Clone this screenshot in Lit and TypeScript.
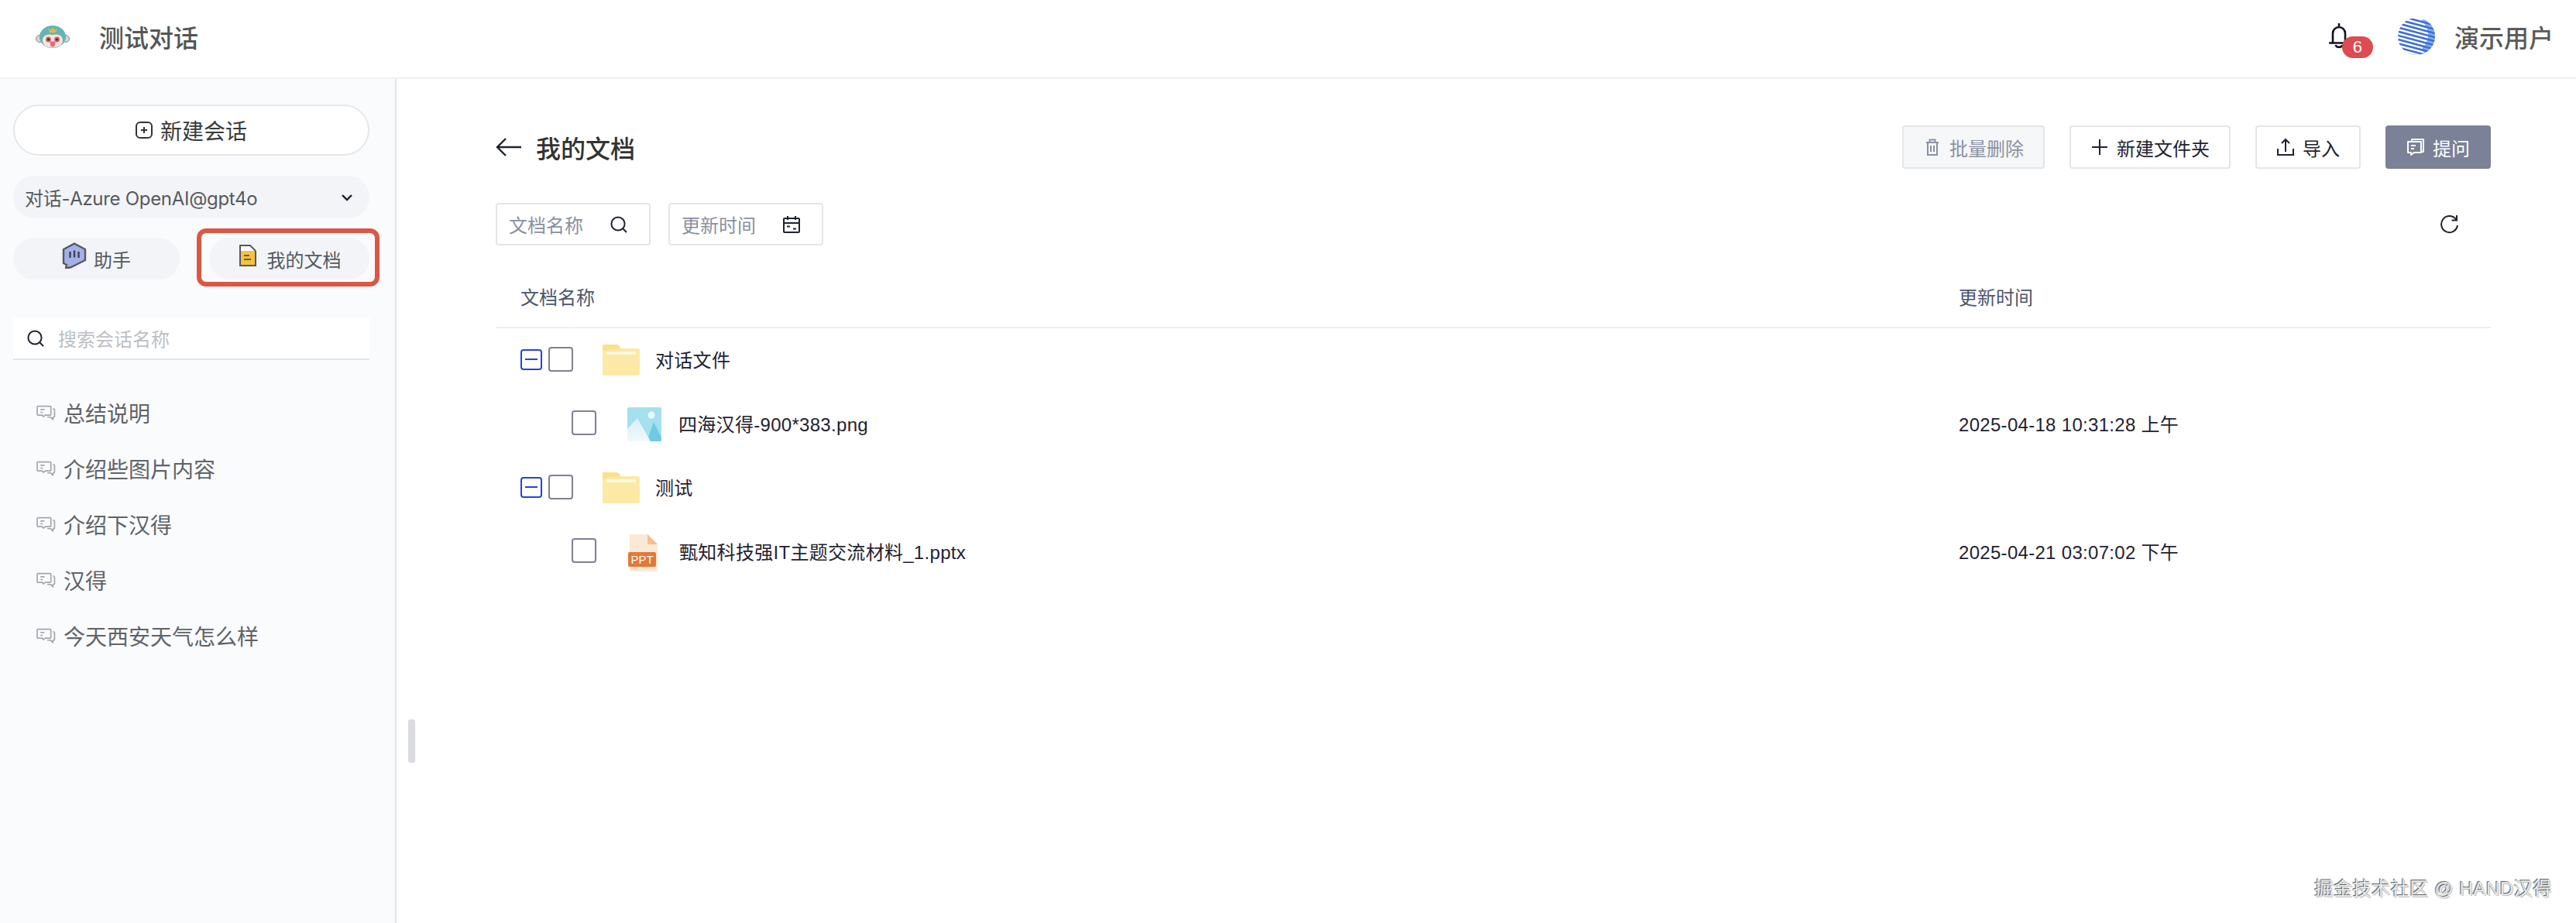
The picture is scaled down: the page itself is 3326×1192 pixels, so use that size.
import { LitElement, html, css, svg } from "lit";
import { customElement } from "lit/decorators.js";

const chatIcon = html`<svg class="chat" viewBox="0 0 24 20" fill="none" stroke="#a3a7ad" stroke-width="1.6" stroke-linejoin="round"><path d="M2 1.500h15a1 1 0 0 1 1 1v9a1 1 0 0 1-1 1h-6l-2.500 2-1-2H2a1 1 0 0 1-1-1v-9a1 1 0 0 1 1-1z"/><path d="M5 5.500h5M5 9h3"/><path d="M20.500 4.500c1.500 0 2 .8 2 1.800v7c0 1-.6 1.700-1.800 1.700l-.2 3-3-3h-4"/></svg>`;
const searchIcon = (c: string) => html`<svg class="i22" viewBox="0 0 22 22" fill="none" stroke="${c}" stroke-width="2"><circle cx="10" cy="10" r="8.600"/><path d="M16.500 16.500l4.500 4.500"/></svg>`;
const checkbox = html`<span class="cb"></span>`;
const minus = html`<span class="minus"><i></i></span>`;
const folder = html`<svg class="folder" viewBox="0 0 48 40"><path d="M2 0h16c2 0 3 1 4 3l1 2h23a2 2 0 0 1 2 2v31a2 2 0 0 1-2 2H2a2 2 0 0 1-2-2V2a2 2 0 0 1 2-2z" fill="#fce9a6"/><path d="M0 8V2a2 2 0 0 1 2-2h16c2 0 3 1 4 3l1 2z" fill="#fbe08e"/><rect x="5" y="9" width="38" height="4" rx="1" fill="#fff8df"/></svg>`;
const imageIcon = html`<svg class="file" viewBox="0 0 44 44"><defs><linearGradient id="mtn" x1="0" y1="0" x2="0" y2="1"><stop offset="0" stop-color="#d8eef6"/><stop offset="1" stop-color="#f2f9fc"/></linearGradient></defs><path d="M2 0h40a2 2 0 0 1 2 2v40a2 2 0 0 1-2 2H0V2a2 2 0 0 1 2-2z" fill="#a4e0ee"/><circle cx="31" cy="10" r="4.500" fill="#eef9fc"/><path d="M25 44l9-25 10 20v3a2 2 0 0 1-2 2z" fill="#6fcbe4"/><path d="M0 44V28L13 14l17 30z" fill="url(#mtn)"/></svg>`;
const pptIcon = html`<svg class="file ppt" viewBox="0 0 38 48"><path d="M2 0h23l13 13v35H2z" fill="#fbe9d6"/><path d="M25 0l13 13H27a2 2 0 0 1-2-2z" fill="#f4c08f"/><rect x="0" y="23" width="36" height="19" rx="2" fill="#e2793a"/><text x="18" y="37.500" text-anchor="middle" class="ppt-t">PPT</text></svg>`;

const stripes = [4, 9, 14, 19, 24, 29, 34, 39, 44, 49].map(
  (y) => svg`<path d="M-6 ${y}H56" stroke="#3f6fd0" stroke-width="2.600"/>`
);

const logo = html`<svg class="logo" viewBox="0 0 44 30">
  <circle cx="5" cy="18" r="4.500" fill="#d4d4d4" stroke="#8a8a8a"/><circle cx="39" cy="18" r="4.500" fill="#d4d4d4" stroke="#8a8a8a"/>
  <ellipse cx="22" cy="15.500" rx="17" ry="14.500" fill="#62b5b0"/>
  <path d="M9 20c0-6 6-9 13-7 7-2 13 1 13 7 0 6-6 9.500-13 9.500S9 26 9 20z" fill="#f7e4de"/>
  <path d="M16 4l3 3 3-3 3 3 3-3-2 6H18z" fill="#e7b84e"/>
  <circle cx="16.500" cy="19" r="3.400" fill="#d8576a"/><circle cx="27.500" cy="19" r="3.400" fill="#d8576a"/>
  <circle cx="16.500" cy="19" r="1.500" fill="#333"/><circle cx="27.500" cy="19" r="1.500" fill="#333"/>
  <path d="M18.500 21.500h7l-.5 4a3 3 0 0 1-6 0z" fill="#de6d7d"/>
</svg>`;

const rows = [
  { folder: true, name: "对话文件", time: "" },
  { folder: false, icon: imageIcon, name: "四海汉得-900*383.png", time: "2025-04-18 10:31:28 上午" },
  { folder: true, name: "测试", time: "" },
  { folder: false, icon: pptIcon, name: "甄知科技强IT主题交流材料_1.pptx", time: "2025-04-21 03:07:02 下午" },
];

@customElement("app-root")
export class AppRoot extends LitElement {
  static styles = css`
    :host { display: block; width: 3326px; height: 1192px; position: relative; overflow: hidden; background: #fff;
      font-family: "Liberation Sans", "Noto Sans CJK SC", sans-serif; font-size: 24px; color: #1f2230; }
    svg { display: block; flex: none; }
    .top { height: 102px; box-sizing: border-box; border-bottom: 2px solid #f0f1f3; display: flex; align-items: center; padding: 0 29px 6px 46px; }
    .logo { width: 44px; height: 30px; margin-right: 38px; }
    .app-name { font-size: 32px; font-weight: 500; color: #555; }
    .spacer { flex: 1; }
    .bell { position: relative; width: 26px; height: 34px; margin-right: 63px; }
    .bell svg { width: 26px; height: 34px; }
    .badge { position: absolute; left: 17px; top: 17px; width: 40px; height: 28px; border-radius: 14px; background: #dc4c50; color: #fff; font-size: 22px; line-height: 28px; text-align: center; }
    .avatar { width: 48px; height: 48px; margin-right: 25px; }
    .user { font-size: 32px; font-weight: 500; color: #5a5a5a; }

    .body { display: flex; height: 1090px; }
    .side { width: 512px; box-sizing: border-box; background: #fafbfd; border-right: 2px solid #e4e6eb; padding: 33px 33px 0 17px; position: relative; flex: none; }
    .new { height: 66px; box-sizing: border-box; border: 2px solid #e5e7ea; border-radius: 33px; background: #fff; display: flex; align-items: center; justify-content: center; gap: 10px; font-size: 28px; color: #3a3a3a; }
    .new svg { width: 22px; height: 22px; }
    .select { height: 55px; margin-top: 26px; background: #f2f4f7; border-radius: 28px; display: flex; align-items: center; justify-content: space-between; padding: 0 22px 0 15px; color: #555a60; font-family: Inter, "Noto Sans CJK SC", sans-serif; letter-spacing: -.3px; }
    .select svg { width: 14px; height: 10px; }
    .tabs { display: flex; justify-content: space-between; margin-top: 25px; }
    .tab { height: 54px; background: #f2f4f7; border-radius: 27px; display: flex; align-items: center; justify-content: center; color: #555a60; position: relative; box-sizing: border-box; }
    .tab.a { width: 215px; gap: 9px; }
    .tab.b { width: 207px; gap: 14px; padding-left: 2px; }
    .tab.a svg { width: 32px; height: 34px; margin-top: -8px; }
    .tab.b svg { width: 22px; height: 28px; margin-top: -8px; }
    .mark { position: absolute; left: -16px; top: -12px; width: 236px; height: 75px; box-sizing: border-box; border: 6px solid #dc5644; border-radius: 12px; }
    .search { height: 55px; margin-top: 49px; box-sizing: border-box; background: #fff; border-bottom: 2px solid #e3e5e9; display: flex; align-items: center; gap: 18px; padding-left: 18px; color: #bcbfc4; }
    .list { margin-top: 32px; padding-left: 30px; }
    .item { height: 72px; display: flex; align-items: center; gap: 10px; font-size: 28px; color: #5f6368; }
    .chat { width: 25px; height: 21px; }
    .handle { position: absolute; left: 527px; top: 929px; width: 9px; height: 56px; border-radius: 3px; background: #d9dbe0; }

    .main { flex: 1; box-sizing: border-box; padding: 60px 110px 0 128px; min-width: 0; }
    .bar { display: flex; align-items: center; height: 56px; }
    .back { width: 33px; height: 26px; margin-right: 19px; }
    .title { font-size: 32px; font-weight: 500; color: #333; margin-top: -1px; }
    .btn { height: 56px; box-sizing: border-box; border: 2px solid #e3e5e9; border-radius: 4px; display: flex; align-items: center; justify-content: center; gap: 10px; color: #1f2230; margin-left: 32px; background: #fff; }
    .btn svg { width: 24px; height: 24px; }
    .btn.del { width: 184px; background: #f5f7f9; color: #8b91a3; }
    .btn.folder-b { width: 208px; }
    .btn.imp { width: 136px; }
    .btn.ask { width: 136px; background: #7b8197; border-color: #7b8197; color: #fff; }
    .filters { display: flex; align-items: center; margin-top: 44px; height: 55px; }
    .field { width: 200px; height: 55px; box-sizing: border-box; border: 2px solid #e3e5e9; border-radius: 4px; display: flex; align-items: center; justify-content: space-between; padding: 0 28px 0 15px; color: #8b90a0; margin-right: 23px; }
    .field svg { width: 22px; height: 22px; }
    .i22 { width: 22px; height: 22px; }
    .refresh { width: 26px; height: 24px; margin-left: auto; margin-right: 40px; }
    .thead { height: 79px; margin-top: 28px; box-sizing: border-box; border-bottom: 2px solid #eef0f2; display: grid; grid-template-columns: 1889px 1fr; align-items: center; color: #4c5570; padding: 0 0 3px 32px; }
    .thead span:last-child { margin-left: -32px; }
    .row { height: 82.5px; display: grid; grid-template-columns: 1889px 1fr; align-items: center; color: #1f2230; letter-spacing: .3px; }
    .row span:not(.cb):not(.minus) { margin-top: -3px; }
    .name { display: flex; align-items: center; }
    .cb { width: 32px; height: 32px; box-sizing: border-box; border: 2px solid #7d8095; border-radius: 4px; flex: none; background: #fff; }
    .minus { width: 28px; height: 27px; box-sizing: border-box; border: 2px solid #2146d2; border-radius: 4px; display: flex; align-items: center; justify-content: center; flex: none; margin-right: 8px; }
    .minus i { display: block; width: 16px; height: 2px; background: #2146d2; }
    .name.dir { padding-left: 32px; }
    .name.dir .cb { margin-top: -2px; margin-right: 38px; }
    .name.dir .folder { width: 48px; height: 40px; margin-right: 20px; }
    .name.dir .minus { margin-top: -2px; }
    .name.doc { padding-left: 98px; }
    .name.doc .cb { margin-top: -4px; margin-right: 40px; }
    .file { width: 44px; height: 44px; margin-right: 22px; }
    .file.ppt { width: 38px; height: 48px; margin-right: 28px; margin-left: 1px; margin-top: 2px; }
    .ppt-t { font-size: 15px; fill: #fff8f0; font-family: "Liberation Sans", sans-serif; letter-spacing: 0; }
    .wm { position: absolute; right: 31px; bottom: 29px; font-size: 24px; letter-spacing: .6px; color: #e9e9e9; text-shadow: -1px -1px 1px #555, 1px 1px 1px #bbb; }
  `;

  render() {
    return html`
      <div class="top">
        ${logo}
        <div class="app-name">测试对话</div>
        <div class="spacer"></div>
        <div class="bell">
          <svg viewBox="0 0 26 34" fill="none" stroke="#10131f" stroke-width="2.600" stroke-linecap="round"><path d="M13 1v3M5 25V13a8 8 0 0 1 16 0v12M1 25.500h24M9 29c1.500 2.500 6.500 2.500 8 0"/></svg>
          <span class="badge">6</span>
        </div>
        <svg class="avatar" viewBox="0 0 48 48">
          <defs><clipPath id="ac"><circle cx="24" cy="24" r="24"/></clipPath></defs>
          <g clip-path="url(#ac)">
            <circle cx="24" cy="24" r="24" fill="#fff"/>
            <path d="M36 2a24 24 0 0 1 0 46h-1l-4-8C42 28 42 14 30 3z" fill="#86aef7"/>
            <g transform="rotate(15 24 24)">${stripes}</g>
          </g>
        </svg>
        <div class="user">演示用户</div>
      </div>
      <div class="body">
        <aside class="side">
          <div class="new">
            <svg viewBox="0 0 22 22" fill="none" stroke="#333" stroke-width="2"><rect x="1" y="1" width="20" height="20" rx="5"/><path d="M7 11h8M11 7v8"/></svg>
            新建会话
          </div>
          <div class="select">
            <span>对话-Azure OpenAI@gpt4o</span>
            <svg viewBox="0 0 14 10" fill="none" stroke="#1f2230" stroke-width="2.400"><path d="M1 2l6 6 6-6"/></svg>
          </div>
          <div class="tabs">
            <div class="tab a">
              <svg viewBox="0 0 32 34"><path d="M16 1.500L30 9v14l-14 7-5 2.500-6 .5 1-4-4-2V9z" fill="#a3b0ea" stroke="#55585f" stroke-width="2.400" stroke-linejoin="round"/><path d="M10.500 12v8M16 10.500v9M21.500 12v8" stroke="#3d4252" stroke-width="2.400"/></svg>
              助手
            </div>
            <div class="tab b">
              <svg viewBox="0 0 22 28"><path d="M1 1h13l7 7v19H1z" fill="#f5c342"/><path d="M1 8V1h13l7 7" fill="#fff" stroke="#55585f" stroke-width="2"/><path d="M1 1v26h20V8" fill="none" stroke="#55585f" stroke-width="2"/><path d="M6 14h7M6 19h9" stroke="#6b5a2a" stroke-width="1.800"/></svg>
              我的文档
              <span class="mark"></span>
            </div>
          </div>
          <div class="search">${searchIcon("#1f2230")}<span>搜索会话名称</span></div>
          <div class="list">
            ${["总结说明", "介绍些图片内容", "介绍下汉得", "汉得", "今天西安天气怎么样"].map((t) => html`<div class="item">${chatIcon}<span>${t}</span></div>`)}
          </div>
        </aside>
        <main class="main">
          <div class="bar">
            <svg class="back" viewBox="0 0 33 26" fill="none" stroke="#1f2230" stroke-width="2.400"><path d="M33 13H2M13 2L2 13l11 11"/></svg>
            <div class="title">我的文档</div>
            <div class="spacer"></div>
            <div class="btn del">
              <svg viewBox="0 0 24 24" fill="none" stroke="#8b91a3" stroke-width="2"><path d="M4 6h16M8.500 6V2.500h7V6M6 6v16h12V6M10 10v8M14 10v8"/></svg>批量删除
            </div>
            <div class="btn folder-b">
              <svg viewBox="0 0 24 24" fill="none" stroke="#1f2230" stroke-width="2"><path d="M12 2v20M2 12h20"/></svg>新建文件夹
            </div>
            <div class="btn imp">
              <svg viewBox="0 0 24 24" fill="none" stroke="#1f2230" stroke-width="2"><path d="M2 14v8h20v-8M12 18V2M7 7l5-5 5 5"/></svg>导入
            </div>
            <div class="btn ask">
              <svg viewBox="0 0 24 24" fill="none" stroke="#fff" stroke-width="2" stroke-linejoin="round"><path d="M7 5V2h15v16h-3M2 5h17v14h-9l-4 3v-3H2zM6 10h6M6 14h4"/></svg>提问
            </div>
          </div>
          <div class="filters">
            <div class="field"><span>文档名称</span>${searchIcon("#1f2230")}</div>
            <div class="field"><span>更新时间</span>
              <svg viewBox="0 0 22 22" fill="none" stroke="#1f2230" stroke-width="2"><rect x="1" y="3" width="20" height="18" rx="1"/><path d="M1 9h20M6 0v5M16 0v5M5 13.500h4M13 16.500h4"/></svg>
            </div>
            <svg class="refresh" viewBox="0 0 26 24" fill="none" stroke="#1f2230" stroke-width="2"><path d="M21.500 6A10.500 10.500 0 1 0 23 13"/><path d="M22 0v6.500h-6.500"/></svg>
          </div>
          <div class="thead"><span>文档名称</span><span>更新时间</span></div>
          ${rows.map((r) =>
            r.folder
              ? html`<div class="row"><div class="name dir">${minus}${checkbox}${folder}<span>${r.name}</span></div><span>${r.time}</span></div>`
              : html`<div class="row"><div class="name doc">${checkbox}${r.icon}<span>${r.name}</span></div><span>${r.time}</span></div>`
          )}
        </main>
      </div>
      <div class="handle"></div>
      <div class="wm">掘金技术社区 @ HAND汉得</div>
    `;
  }
}
